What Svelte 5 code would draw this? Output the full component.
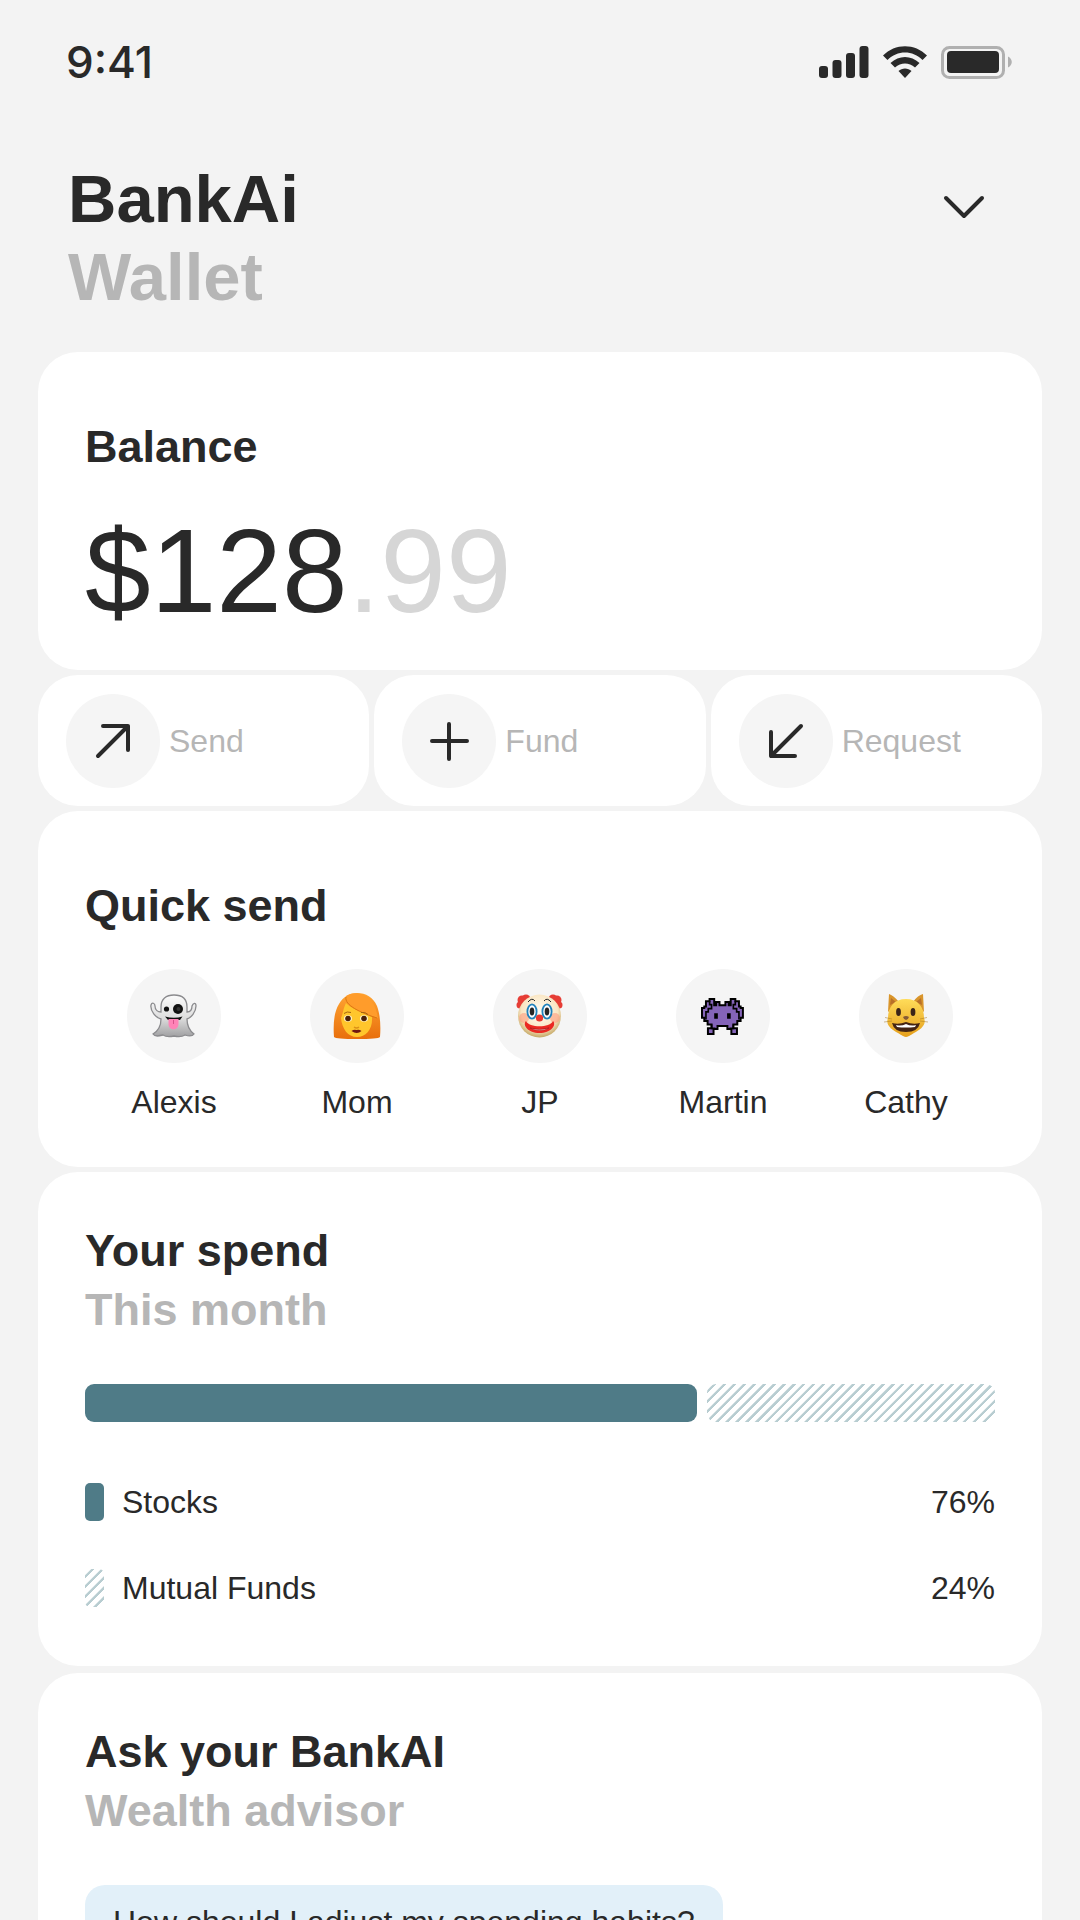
<script lang="ts">
    type Action = { id: string; label: string; path: string };
    type Contact = { id: string; name: string };
    type Fund = { label: string; share: number; bar: number; hatched: boolean };

    const actions: Action[] = [
        { id: "send", label: "Send", path: "M8 36L38 6M13 6H38V30" },
        { id: "fund", label: "Fund", path: "M23 4V39M6 21H41" },
        { id: "request", label: "Request", path: "M38 6L8 36M8 12V36H32" },
    ];

    const contacts: Contact[] = [
        { id: "ghost", name: "Alexis" },
        { id: "woman", name: "Mom" },
        { id: "clown", name: "JP" },
        { id: "alien", name: "Martin" },
        { id: "cat", name: "Cathy" },
    ];

    const funds: Fund[] = [
        { label: "Stocks", share: 76, bar: 68, hatched: false },
        { label: "Mutual Funds", share: 24, bar: 32, hatched: true },
    ];
</script>

<div class="screen">
    <div class="status">
        <time>9:41</time>
        <div class="status-icons">
            <svg width="50" height="32" viewBox="0 0 50 32" aria-hidden="true">
                <rect x="0" y="20" width="9" height="12" rx="3" />
                <rect x="13.5" y="14" width="9" height="18" rx="3" />
                <rect x="27" y="7" width="9" height="25" rx="3" />
                <rect x="40.5" y="0" width="9" height="32" rx="3" />
            </svg>
            <svg width="46" height="32" viewBox="0 0 46 32" aria-hidden="true">
                <path d="M1 9.5C13-3 33-3 45 9.5L40.5 14C31 4 15 4 5.5 14Z" />
                <path d="M8.5 17C17 9 29 9 37.5 17L33 21.5C27 16 19 16 13 21.5Z" />
                <path d="M16.5 25C20 21.5 26 21.5 29.5 25L23 32Z" />
            </svg>
            <svg width="71" height="32" viewBox="0 0 71 32" aria-hidden="true">
                <rect class="shell" x="1.5" y="1.5" width="61" height="30" rx="7" />
                <rect x="6" y="5" width="52" height="22" rx="4" />
                <path class="tip" d="M67 10.5C72 13 72 19 67 21.5Z" />
            </svg>
        </div>
    </div>

    <header class="top">
        <div>
            <h1>BankAi</h1>
            <p class="subtitle">Wallet</p>
        </div>
        <button class="toggle" aria-label="Switch account">
            <svg class="line" width="42" height="26" viewBox="0 0 42 26" aria-hidden="true">
                <path d="M3 4L21 22L39 4" />
            </svg>
        </button>
    </header>

    <main>
        <section class="card roomy balance">
            <h2>Balance</h2>
            <p class="amount">$128<span>.99</span></p>
        </section>

        <div class="actions">
            {#each actions as action}
                <button class="action">
                    <span class="disc">
                        <svg class="line" width="46" height="42" viewBox="0 0 46 42" aria-hidden="true">
                            <path d={action.path} />
                        </svg>
                    </span>
                    {action.label}
                </button>
            {/each}
        </div>

        <section class="card roomy quick">
            <h2>Quick send</h2>
            <div class="contacts">
                {#each contacts as contact}
                    <button class="contact">
                        <span class="disc">
                            <svg width="48" height="48" viewBox="0 0 48 48" aria-hidden="true">
                                {#if contact.id === "ghost"}
                                    <defs>
                                        <linearGradient id="sheet" x1="0" y1="0" x2="0" y2="1">
                                            <stop offset="0" stop-color="#fbfbfb" />
                                            <stop offset="0.55" stop-color="#dedede" />
                                            <stop offset="1" stop-color="#a0a0a2" />
                                        </linearGradient>
                                    </defs>
                                    <path
                                        d="M11 27C6 26 0 19 1 13C2 10 5 11 5 14C5 18 8 20 11 20V15C11 7 16 3 24 3C32 3 37 7 37 15V20C40 20 42 18 42 14C43 11 46 10 46 14C46 20 41 26 37 27C37 34 40 39 44 42C42 45 38 44 35 43C32 45 28 45 24 44C20 45 16 45 13 43C9 44 5 45 3 42C8 39 11 34 11 27Z"
                                        fill="url(#sheet)"
                                        stroke="#8b8b8e"
                                        stroke-width="1.3"
                                    />
                                    <circle cx="16.5" cy="17" r="2.6" fill="#111" />
                                    <circle cx="28" cy="17" r="5" fill="#111" />
                                    <circle cx="28.5" cy="17" r="2" fill="#333" />
                                    <path d="M15 24.5Q24 27 32.5 24.5L30 28H18Z" fill="#111" />
                                    <path d="M18.5 27H28.5V32C28.5 39 18.5 39 18.5 32Z" fill="#ff83b7" />
                                    <path d="M23.5 28V32" stroke="#d8538b" stroke-width="1" />
                                {:else if contact.id === "woman"}
                                    <defs>
                                        <linearGradient id="hair" x1="0" y1="0" x2="0" y2="1">
                                            <stop offset="0" stop-color="#ffa533" />
                                            <stop offset="1" stop-color="#e86f0c" />
                                        </linearGradient>
                                    </defs>
                                    <path d="M1 45C0 32 1 20 6 12C10 5 16 1 24 1C33 1 40 5 44 14C47 22 48 33 47 45Q45 47 24 47Q3 47 1 45Z" fill="url(#hair)" />
                                    <path d="M8 26C10 22 10 17 13 11C18 17 30 20 39 25C40 37 33 45 24 45C15 45 9 37 8 26Z" fill="#ffc62c" />
                                    <path d="M13 4C11 13 28 21 45 26C43 14 38 6 31 3C24 0 17 1 13 4Z" fill="#ff9c2b" />
                                    <path d="M13 5C11 13 28 21 44 26" fill="none" stroke="#dc7812" stroke-width="1" />
                                    <ellipse cx="15" cy="26.5" rx="4" ry="3.2" fill="#fff4d0" />
                                    <ellipse cx="31" cy="26.5" rx="4" ry="3.2" fill="#fff4d0" />
                                    <circle cx="15" cy="26.5" r="2.8" fill="#4b2108" />
                                    <circle cx="31" cy="26.5" r="2.8" fill="#4b2108" />
                                    <path d="M11 21.5Q14 19 18 20.5M28 20.5Q32 19.5 35 22.5" fill="none" stroke="#a76510" stroke-width="1" />
                                    <path d="M21 35Q23.5 37 26 35" fill="none" stroke="#dc9217" stroke-width="1.5" />
                                    <path d="M18.5 39Q21 37 23.5 38Q26 37 28.5 39Q24 43 18.5 39Z" fill="#6f1711" />
                                {:else if contact.id === "clown"}
                                    <defs>
                                        <radialGradient id="paint" cx="0.5" cy="0.4" r="0.65">
                                            <stop offset="0" stop-color="#fffdf4" />
                                            <stop offset="0.65" stop-color="#fae6c3" />
                                            <stop offset="1" stop-color="#b5964a" />
                                        </radialGradient>
                                    </defs>
                                    <g fill="#e63d35">
                                        <circle cx="6" cy="8" r="4.5" />
                                        <circle cx="10" cy="7" r="4.5" />
                                        <circle cx="4" cy="13" r="3.5" />
                                        <circle cx="41" cy="8" r="4.5" />
                                        <circle cx="37" cy="7" r="4.5" />
                                        <circle cx="43" cy="13" r="3.5" />
                                    </g>
                                    <circle cx="23.5" cy="24" r="21.5" fill="url(#paint)" />
                                    <circle cx="8" cy="26" r="5" fill="#ff9c7e" opacity="0.6" />
                                    <circle cx="39" cy="26" r="5" fill="#ff9c7e" opacity="0.6" />
                                    <ellipse cx="16" cy="19.5" rx="4.6" ry="7.2" fill="#fff" stroke="#2182bb" stroke-width="1.8" />
                                    <ellipse cx="31" cy="19.5" rx="4.6" ry="7.2" fill="#fff" stroke="#2182bb" stroke-width="1.8" />
                                    <ellipse cx="16" cy="19.5" rx="2.3" ry="4" fill="#252525" />
                                    <ellipse cx="31" cy="19.5" rx="2.3" ry="4" fill="#252525" />
                                    <path d="M12 10Q16 5 19 9M28 9Q31 5 35 10" fill="none" stroke="#222" stroke-width="1" />
                                    <path d="M10 29C13 36 34 36 37 29C41 33 35 41 23.5 41C12 41 6 33 10 29Z" fill="#eb2822" />
                                    <path d="M14 36Q23.5 39 33 36Q24 41 14 36Z" fill="#fff" stroke="#a51414" stroke-width="0.6" />
                                    <circle cx="23.5" cy="26" r="3.6" fill="#ea3830" />
                                {:else if contact.id === "alien"}
                                    <g transform="translate(2 6) scale(3.3)">
                                        <path
                                            d="M6.5 2.2H5.6V1.2H4.6V2.2H4V.3H2.6V1H1.5V2.6H1V3H.3V6H1V7H2V8H3.2V9.2H2.1V10.9H3.8V9.4H5V8.5H8V9.4H9.2V10.9H10.9V9.2H9.8V8H11V7H12V6H12.7V3H12V2.6H11.5V1H10.4V.3H9V2.2H8.4V1.2H7.4V2.2Z"
                                            fill="#8464b8"
                                            stroke="#000"
                                            stroke-width="0.6"
                                        />
                                        <path
                                            d="M2.6 1V2H3.2V3.2H2.2V4.2H1.5V6.5M10.4 1V2H9.8V3.2H10.8V4.2H11.5V6.5M3.2 8V9.2H4.4M9.8 8V9.2H8.600"
                                            fill="none"
                                            stroke="#000"
                                            stroke-width="0.5"
                                        />
                                        <path d="M4 4.6H5.1V6.3H4ZM7.9 4.6H9V6.3H7.9Z" fill="#000" />
                                    </g>
                                {:else}
                                    <defs>
                                        <linearGradient id="fur" x1="0" y1="0" x2="0" y2="1">
                                            <stop offset="0" stop-color="#ffdc59" />
                                            <stop offset="1" stop-color="#e59f1c" />
                                        </linearGradient>
                                    </defs>
                                    <path d="M6 20L7 2Q11 3 17 10M31 10Q36 3 41 2L42 20" fill="#d9952b" />
                                    <path d="M8 13L9 6L14 10ZM40 13L39 6L34 10Z" fill="#b87029" />
                                    <path d="M24 7C36 7 42 15 42 26C45 33 38 38 32 41Q26 45 24 45Q22 45 16 41C10 38 3 33 6 26C6 15 12 7 24 7Z" fill="url(#fur)" />
                                    <ellipse cx="16.5" cy="20" rx="2.4" ry="4" fill="#3b2418" />
                                    <ellipse cx="31" cy="20" rx="2.4" ry="4" fill="#3b2418" />
                                    <path d="M10 31Q17 33 24 30Q31 33 38 31Q36 40 24 40Q12 40 10 31Z" fill="#442413" />
                                    <path d="M14 33Q19 34.5 24 32Q29 34.5 34 33L33 35Q24 36 15 35Z" fill="#fff" />
                                    <path d="M21 25Q24 23 27 25Q26 28 24 28Q22 28 21 25Z" fill="#845a36" />
                                    <path d="M10 27L3 25.5M10 29L2 30M38 27L45 25.5M38 29L46 30" fill="none" stroke="#a4751e" stroke-width="0.5" />
                                {/if}
                            </svg>
                        </span>
                        {contact.name}
                    </button>
                {/each}
            </div>
        </section>

        <section class="card spend">
            <h2>Your spend</h2>
            <p class="caption">This month</p>
            <div class="bar">
                {#each funds as fund}
                    <div class="segment" class:hatched={fund.hatched} style:flex-grow={fund.bar}></div>
                {/each}
            </div>
            <dl class="legend">
                {#each funds as fund}
                    <div class="row">
                        <dt><span class="swatch" class:hatched={fund.hatched}></span>{fund.label}</dt>
                        <dd>{fund.share}%</dd>
                    </div>
                {/each}
            </dl>
        </section>

        <section class="card ask">
            <h2>Ask your BankAI</h2>
            <p class="caption">Wealth advisor</p>
            <button class="prompt">How should I adjust my spending habits?</button>
        </section>
    </main>
</div>

<style>
    :global(body) {
        background-color: #f3f3f3;
    }

    .screen {
        --ink: #292929;
        --muted: #b6b6b6;
        --teal: #4f7b87;

        box-sizing: border-box;
        height: 100vh;
        overflow: hidden;
        padding: 36px 38px 0;
        color: var(--ink);
        background-color: #f3f3f3;
        font-family: "Liberation Sans", Arial, sans-serif;
        font-size: 32px;
        line-height: 40px;
    }

    h1, h2, p, dl, dd {
        margin: 0;
    }

    button {
        border: none;
        padding: 0;
        background: none;
        color: inherit;
        font: inherit;
        cursor: pointer;
    }

    svg {
        display: block;
        flex: none;
        overflow: visible;
    }

    .line {
        fill: none;
        stroke: var(--ink);
        stroke-width: 4;
        stroke-linecap: round;
        stroke-linejoin: round;
    }

    .status {
        display: flex;
        align-items: center;
        justify-content: space-between;
        padding: 0 30px 0 28px;
    }

    .status time {
        font-family: Inter, sans-serif;
        font-size: 44px;
        font-weight: 500;
        line-height: 52px;
    }

    .status-icons {
        display: flex;
        gap: 13px;
        fill: var(--ink);
    }

    .shell {
        fill: none;
        stroke: #b0b0b0;
        stroke-width: 3;
    }

    .tip {
        fill: #b0b0b0;
    }

    .top {
        display: flex;
        align-items: flex-start;
        justify-content: space-between;
        padding: 72px 47px 36px 30px;
    }

    h1, .subtitle {
        font-size: 67px;
        font-weight: 700;
        line-height: 78px;
    }

    h2, .caption {
        font-size: 45px;
        font-weight: 700;
        line-height: 59px;
    }

    .subtitle, .caption {
        color: var(--muted);
    }

    .toggle {
        display: grid;
        place-items: center;
        width: 62px;
        height: 94px;
    }

    main {
        display: grid;
        gap: 5px;
    }

    .card {
        border-radius: 40px;
        padding: 49px 47px 58px;
        background-color: #fff;
    }

    .card.roomy {
        padding-top: 65px;
    }

    .card.balance {
        padding-bottom: 39px;
    }

    .amount {
        margin-top: 35px;
        font-size: 118px;
        line-height: 120px;
    }

    .amount span {
        color: #d6d6d6;
    }

    .actions {
        display: grid;
        grid-template-columns: repeat(3, 1fr);
        gap: 5px;
    }

    .action {
        display: flex;
        align-items: center;
        gap: 9px;
        border-radius: 40px;
        padding: 19px 28px 18px;
        background-color: #fff;
        color: var(--muted);
    }

    .disc {
        display: grid;
        flex: none;
        place-items: center;
        width: 94px;
        height: 94px;
        border-radius: 50%;
        background-color: #f5f5f5;
    }

    .card.quick {
        padding-bottom: 45px;
    }

    .contacts {
        display: flex;
        justify-content: space-between;
        margin-top: 34px;
        padding: 0 42px;
    }

    .contact {
        display: grid;
        gap: 19px;
        justify-items: center;
        width: 94px;
    }

    .bar {
        display: flex;
        gap: 10px;
        margin-top: 45px;
    }

    .segment {
        height: 38px;
        border-radius: 9px;
        background-color: var(--teal);
    }

    .legend {
        display: grid;
        gap: 46px;
        margin-top: 60px;
    }

    .row, dt {
        display: flex;
        align-items: center;
    }

    .row {
        justify-content: space-between;
    }

    dt {
        gap: 18px;
    }

    .swatch {
        width: 19px;
        height: 38px;
        border-radius: 5px;
        background-color: var(--teal);
    }

    .hatched {
        background: repeating-linear-gradient(135deg, #fff 0 4px, #b8cdd1 5px 7px);
    }

    .ask {
        margin-top: 2px;
    }

    .prompt {
        margin-top: 45px;
        border-radius: 20px;
        padding: 17px 28px;
        background-color: #e2f0f9;
    }
</style>
